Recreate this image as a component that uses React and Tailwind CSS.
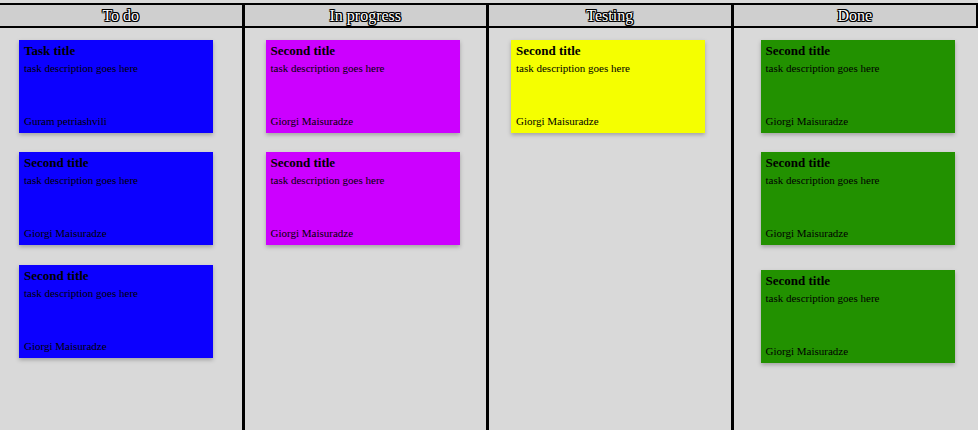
const columns = [
  {
    title: 'To do',
    pad: 'pl-[19px]',
    color: 'bg-[#0c00ff]',
    tasks: [
      { title: 'Task title', author: 'Guram petriashvili', gap: 'mt-[12px]' },
      { title: 'Second title', author: 'Giorgi Maisuradze', gap: 'mt-[19px]' },
      { title: 'Second title', author: 'Giorgi Maisuradze', gap: 'mt-[20px]' },
    ],
  },
  {
    title: 'In progress',
    pad: 'pl-[21px]',
    color: 'bg-[#cc00ff]',
    tasks: [
      { title: 'Second title', author: 'Giorgi Maisuradze', gap: 'mt-[12px]' },
      { title: 'Second title', author: 'Giorgi Maisuradze', gap: 'mt-[19px]' },
    ],
  },
  {
    title: 'Testing',
    pad: 'pl-[22px]',
    color: 'bg-[#f5ff00]',
    tasks: [{ title: 'Second title', author: 'Giorgi Maisuradze', gap: 'mt-[12px]' }],
  },
  {
    title: 'Done',
    pad: 'pl-[27px]',
    color: 'bg-[#229100]',
    tasks: [
      { title: 'Second title', author: 'Giorgi Maisuradze', gap: 'mt-[12px]' },
      { title: 'Second title', author: 'Giorgi Maisuradze', gap: 'mt-[19px]' },
      { title: 'Second title', author: 'Giorgi Maisuradze', gap: 'mt-[25px]' },
    ],
  },
];

function Card({ task, color }) {
  return (
    <div className={`${task.gap} ${color} w-[194px] h-[93px] flex flex-col px-[5px] pt-[3px] pb-[5px] shadow-[0_2px_4px_rgba(0,0,0,0.25)] text-black`}>
      <div className="text-[13px] font-bold leading-[16px]">{task.title}</div>
      <div className="text-[11px] leading-[16px] pt-[1px]">task description goes here</div>
      <div className="mt-auto text-[11px] leading-[14px]">{task.author}</div>
    </div>
  );
}

export default function App() {
  return (
    <div className="h-screen bg-[#d9d9d9] pt-[3px] flex flex-col font-['Liberation_Serif',serif]">
      <div className="grid grid-cols-4 h-full">
        {columns.map((col, i) => (
          <div
            key={col.title}
            className={`flex flex-col ${i < 3 ? 'border-r-[3px] border-black' : ''}`}
          >
            <div
              className={`h-[25px] bg-[#cfcfcf] border-y-2 border-black flex items-center justify-center text-white text-[16px] font-normal [text-shadow:1px_1px_0_#000,-1px_-1px_0_#000,1px_-1px_0_#000,-1px_1px_0_#000,1px_0_0_#000,-1px_0_0_#000,0_1px_0_#000,0_-1px_0_#000] ${i === 3 ? 'border-r-2' : ''}`}
            >
              {col.title}
            </div>
            <div className={`flex-1 flex flex-col ${col.pad}`}>
              {col.tasks.map((t, j) => (
                <Card key={j} task={t} color={col.color} />
              ))}
            </div>
          </div>
        ))}
      </div>
    </div>
  );
}
